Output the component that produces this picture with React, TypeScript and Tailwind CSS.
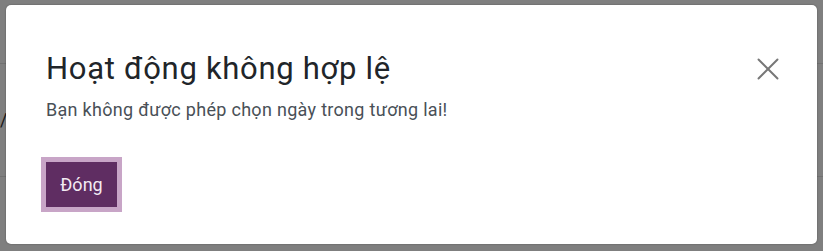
import React from 'react';
import { X } from 'lucide-react';

const font = { fontFamily: 'Roboto, "Noto Sans", sans-serif' };

export default function App() {
  return (
    <div className="relative w-[823px] h-[251px] overflow-hidden bg-white" style={font}>
      {/* page behind the dialog */}
      <div className="h-[64px] border-b border-[#e2e2e2]" />
      <div className="h-[113px] border-b border-[#e2e2e2] flex items-center">
        <span className="text-[18px] leading-none text-[#333]">/</span>
      </div>

      {/* backdrop + dialog */}
      <div className="absolute inset-0 bg-black/50 px-[6px] pt-[5px]">
        <div className="h-[239px] bg-white rounded-[5px] shadow-[0_0_2px_rgba(0,0,0,0.35)] pl-[40px] pr-[30px] pt-[46px]">
          <div className="flex items-start justify-between">
            <div>
              <h1 className="text-[31px] leading-[36px] tracking-[0.7px] text-[#212529] font-normal">
                Hoạt động không hợp lệ
              </h1>
              <p className="mt-[11px] text-[18px] leading-[24px] tracking-[0.3px] text-[#495057]">
                Bạn không được phép chọn ngày trong tương lai!
              </p>
            </div>
            <button type="button" className="-mt-[1px] text-[#777]" aria-label="Close">
              <X size={38} strokeWidth={1.25} />
            </button>
          </div>
          <button
            type="button"
            className="mt-[40px] w-[71px] h-[45px] bg-[#5f2d62] text-[#f3eaf2] text-[18px] ring-[5px] ring-[#c8a5c7]"
          >
            Đóng
          </button>
        </div>
      </div>
    </div>
  );
}
